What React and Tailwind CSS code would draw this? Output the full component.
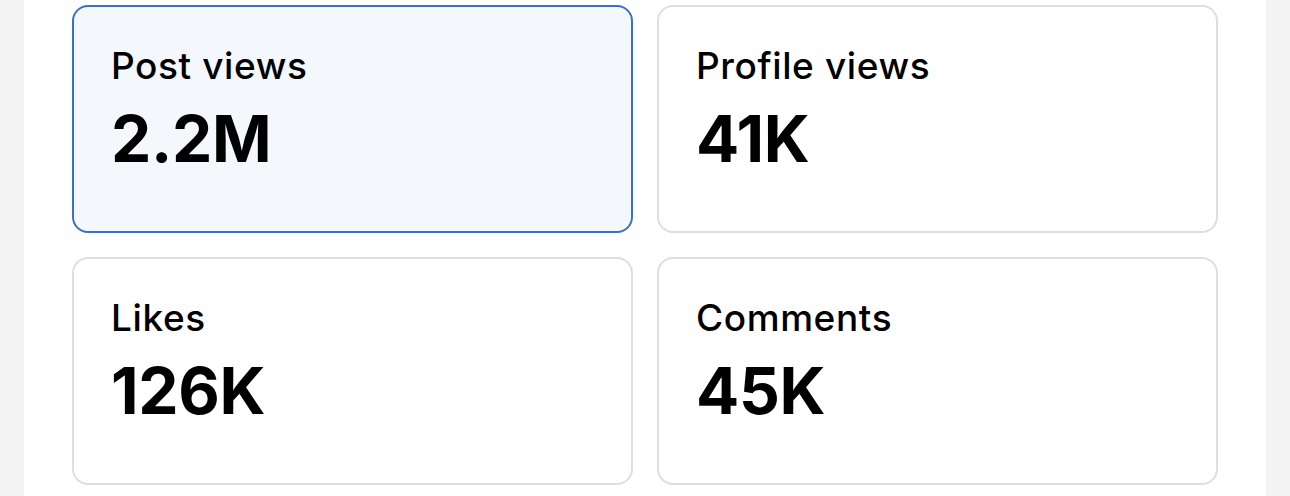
const stats = [
  { label: 'Post views', value: '2.2M', active: true },
  { label: 'Profile views', value: '41K' },
  { label: 'Likes', value: '126K' },
  { label: 'Comments', value: '45K' },
];

const StatCard = ({ label, value, active }) => (
  <div
    className={
      'h-[228px] rounded-[16px] border-2 px-[37px] pt-[35px] ' +
      (active ? 'border-[#3a71c1] bg-[#f4f8fc]' : 'border-[#dedede] bg-white')
    }
  >
    <div className="text-[37px] leading-[48px] font-medium tracking-[0.6px] text-black">{label}</div>
    <div className="mt-[13px] text-[64px] leading-[72px] font-bold tracking-[-0.3px] text-black">{value}</div>
  </div>
);

export default function App() {
  return (
    <div className="h-[496px] bg-[#f3f3f3] px-[24px] font-['Inter',sans-serif]">
      <div className="h-full bg-white px-[48px] pt-[5px]">
        <div className="grid grid-cols-2 gap-[24px]">
          {stats.map((s) => (
            <StatCard key={s.label} {...s} />
          ))}
        </div>
      </div>
    </div>
  );
}
